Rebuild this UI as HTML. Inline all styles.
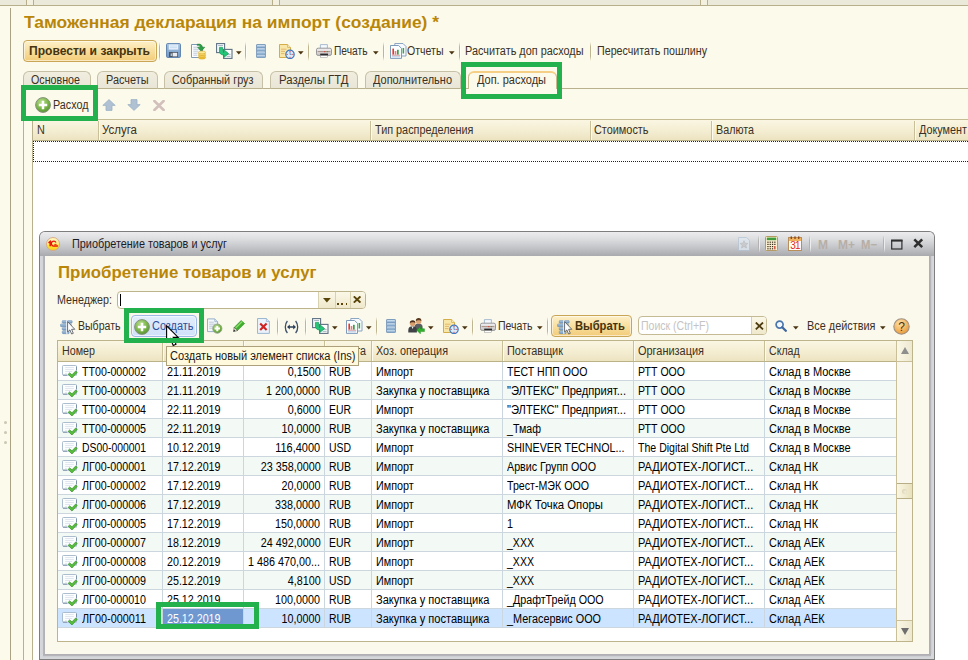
<!DOCTYPE html>
<html><head><meta charset="utf-8"><title>1C</title>
<style>
html,body{margin:0;padding:0;overflow:hidden;}
html{width:968px;height:660px;}
body{width:968px;height:660px;overflow:hidden;background:#fcfaeb;position:relative;font-family:"Liberation Sans", sans-serif;}
div,span,svg{position:absolute;box-sizing:border-box;}
span{white-space:pre;}
</style></head><body>
<div style="left:0px;top:0px;width:968px;height:5px;background:#ebe9da;"></div><div style="left:0px;top:5px;width:968px;height:1px;background:#b7ae8b;"></div><div style="left:26px;top:0px;width:1px;height:5px;background:#b7ae8b;"></div><div style="left:33px;top:0px;width:1px;height:5px;background:#b7ae8b;"></div><div style="left:272px;top:0px;width:1px;height:5px;background:#b7ae8b;"></div><div style="left:279px;top:0px;width:1px;height:5px;background:#b7ae8b;"></div><div style="left:700px;top:0px;width:1px;height:5px;background:#b7ae8b;"></div><div style="left:707px;top:0px;width:1px;height:5px;background:#b7ae8b;"></div><div style="left:27px;top:0px;width:6px;height:5px;background:#f3f0df;"></div><div style="left:273px;top:0px;width:6px;height:5px;background:#f3f0df;"></div><div style="left:701px;top:0px;width:6px;height:5px;background:#f3f0df;"></div><div style="left:10px;top:8px;width:1px;height:652px;background:#aaa283;"></div><div style="left:23px;top:121px;width:1px;height:539px;background:#b9b18e;"></div><div style="left:3.5px;top:420.5px;width:3px;height:3px;background:#cbc7b4;border-radius:1.5px;"></div><div style="left:3.5px;top:430.5px;width:3px;height:3px;background:#cbc7b4;border-radius:1.5px;"></div><div style="left:3.5px;top:440.5px;width:3px;height:3px;background:#cbc7b4;border-radius:1.5px;"></div><span style="top:11.88px;font-size:17px;line-height:21px;color:#b98608;font-weight:bold;left:23.7px;transform-origin:0 0;transform:scaleX(1.0249);">Таможенная декларация на импорт (создание) *</span><div style="left:23px;top:40px;width:134px;height:22px;border:1px solid #c8a656;border-radius:4px;background:linear-gradient(#fdf0c8,#f8dd9a 55%,#f2cc78);box-shadow:inset 0 0 0 1px rgba(255,255,255,.55);"></div><span style="top:43.03px;font-size:12px;line-height:16px;color:#45340f;font-weight:bold;left:28.7px;transform-origin:0 0;transform:scaleX(1.0057);">Провести и закрыть</span><div style="left:159px;top:42px;width:1px;height:19px;background:linear-gradient(rgba(190,180,140,0),#bfb58e 25%,#bfb58e 75%,rgba(190,180,140,0));"></div><div style="left:160px;top:42px;width:1px;height:19px;background:linear-gradient(rgba(255,255,255,0),#fffef6 25%,#fffef6 75%,rgba(255,255,255,0));"></div><div style="left:245px;top:42px;width:1px;height:19px;background:linear-gradient(rgba(190,180,140,0),#bfb58e 25%,#bfb58e 75%,rgba(190,180,140,0));"></div><div style="left:246px;top:42px;width:1px;height:19px;background:linear-gradient(rgba(255,255,255,0),#fffef6 25%,#fffef6 75%,rgba(255,255,255,0));"></div><div style="left:308px;top:42px;width:1px;height:19px;background:linear-gradient(rgba(190,180,140,0),#bfb58e 25%,#bfb58e 75%,rgba(190,180,140,0));"></div><div style="left:309px;top:42px;width:1px;height:19px;background:linear-gradient(rgba(255,255,255,0),#fffef6 25%,#fffef6 75%,rgba(255,255,255,0));"></div><div style="left:383px;top:42px;width:1px;height:19px;background:linear-gradient(rgba(190,180,140,0),#bfb58e 25%,#bfb58e 75%,rgba(190,180,140,0));"></div><div style="left:384px;top:42px;width:1px;height:19px;background:linear-gradient(rgba(255,255,255,0),#fffef6 25%,#fffef6 75%,rgba(255,255,255,0));"></div><div style="left:459px;top:42px;width:1px;height:19px;background:linear-gradient(rgba(190,180,140,0),#bfb58e 25%,#bfb58e 75%,rgba(190,180,140,0));"></div><div style="left:460px;top:42px;width:1px;height:19px;background:linear-gradient(rgba(255,255,255,0),#fffef6 25%,#fffef6 75%,rgba(255,255,255,0));"></div><div style="left:590px;top:42px;width:1px;height:19px;background:linear-gradient(rgba(190,180,140,0),#bfb58e 25%,#bfb58e 75%,rgba(190,180,140,0));"></div><div style="left:591px;top:42px;width:1px;height:19px;background:linear-gradient(rgba(255,255,255,0),#fffef6 25%,#fffef6 75%,rgba(255,255,255,0));"></div><svg style="left:166px;top:43px" width="16" height="16" viewBox="0 0 16 16">
<defs><linearGradient id="svb" x1="0" y1="0" x2="0" y2="1"><stop offset="0" stop-color="#a6c2e0"/><stop offset="1" stop-color="#7098c6"/></linearGradient></defs>
<rect x="0.5" y="0.5" width="14" height="14" rx="1.2" fill="url(#svb)" stroke="#6487b2"/>
<rect x="2.8" y="1.2" width="9.4" height="5.6" fill="#f4f9ff" stroke="#a9c3de" stroke-width=".6"/>
<path d="M3.8 3h7.4M3.8 4.8h7.4" stroke="#b5d3ee" stroke-width=".9"/>
<rect x="3" y="9" width="9" height="5" fill="#4d5560"/>
<rect x="6.6" y="9.8" width="4.6" height="3.6" fill="#e9edf2"/>
<rect x="4.6" y="10.4" width="1.4" height="2.6" fill="#a8c4e4"/></svg><svg style="left:191px;top:42.5px" width="16" height="17" viewBox="0 0 16 17">
<path d="M0.5 1.5 H9 L11.5 4 V14.5 H0.5 Z" fill="#fbfdff" stroke="#7f9ab8"/>
<path d="M2.3 4.2h5.4M2.3 6.2h6M2.3 8.2h5M2.3 10.2h4.4M2.3 12.2h4" stroke="#b7c4d2" stroke-width=".9"/>
<path d="M6.2 1.2 C9.5 0.6 11.2 1.8 11.2 4.2 H13.8 L10.2 8.4 L6.6 4.2 H9 C8.9 2.9 8 2.2 6.2 2.4 Z" fill="#2ea043" stroke="#1d7a2c" stroke-width=".5"/>
<g stroke="#c9951a" stroke-width=".5">
<ellipse cx="11" cy="14.6" rx="3.6" ry="1.5" fill="#f3c53a"/>
<ellipse cx="11" cy="12.8" rx="3.6" ry="1.5" fill="#f7d35a"/>
<ellipse cx="11" cy="11" rx="3.6" ry="1.5" fill="#f9dc70"/>
<ellipse cx="11" cy="9.4" rx="3.6" ry="1.5" fill="#fde88f"/></g></svg><svg style="left:215.5px;top:43px" width="17" height="16" viewBox="0 0 17 16">
<rect x="0.6" y="0.6" width="8" height="9" fill="#fdfefe" stroke="#5e7183" stroke-width="1.1"/>
<path d="M2.2 2.6h4.8" stroke="#9fb0c0" stroke-width="1"/>
<rect x="7.6" y="6.4" width="8.4" height="9" fill="#fdfefe" stroke="#5e7183" stroke-width="1.1"/>
<path d="M10.6 11.6h4M10.6 13.4h4" stroke="#9fb0c0" stroke-width=".9"/>
<path d="M3.4 4.4 H6.6 V8 C6.6 9 7.2 9.4 8.2 9.4 V7 L12.6 10.6 L8.2 14.2 V12 C5 12 3.4 10.6 3.4 8 Z" fill="#22c777" stroke="#0f9a57" stroke-width=".7"/></svg><svg style="left:236px;top:51px" width="6" height="4" viewBox="0 0 6 4"><path d="M0 0.3 H5.6 L2.8 3.4 Z" fill="#4a3410"/></svg><svg style="left:256px;top:44px" width="10" height="14" viewBox="0 0 10 14">
<defs><linearGradient id="lsb" x1="0" y1="0" x2="0" y2="1"><stop offset="0" stop-color="#e3eef8"/><stop offset=".5" stop-color="#a8c4df"/><stop offset="1" stop-color="#86a9cc"/></linearGradient></defs>
<rect x=".3" y=".3" width="9.4" height="13.4" rx="1.3" fill="#6f94ba" stroke="#6489b0" stroke-width=".5"/><rect x="1" y="0.9" width="8" height="2.6" rx=".6" fill="url(#lsb)"/><rect x="1" y="4.15" width="8" height="2.6" rx=".6" fill="url(#lsb)"/><rect x="1" y="7.4" width="8" height="2.6" rx=".6" fill="url(#lsb)"/><rect x="1" y="10.65" width="8" height="2.6" rx=".6" fill="url(#lsb)"/></svg><svg style="left:278.5px;top:43.7px" width="16" height="15" viewBox="0 0 16 15">
<path d="M0.5 0.5 H8.6 L11.5 3.4 V13.5 H0.5 Z" fill="#f8e7a6" stroke="#d3ad4a"/>
<path d="M8.6 0.5 V3.4 H11.5" fill="#fdf4cf" stroke="#d3ad4a" stroke-width=".8"/>
<path d="M2.3 5.2h5M2.3 7.4h3.4M2.3 9.6h3" stroke="#d9a35a" stroke-width="1" stroke-dasharray="1.4 .6"/>
<circle cx="11" cy="10.4" r="4.2" fill="#deebf9" stroke="#3f78c4" stroke-width="1.2"/>
<path d="M11 10.6 V8 M11 10.4 H12.8" stroke="#5a88c8" stroke-width=".8"/>
<g fill="#e03030"><rect x="10.5" y="7" width="1" height="1.1"/><rect x="10.5" y="12.8" width="1" height="1.1"/><rect x="7.6" y="9.9" width="1.1" height="1"/><rect x="13.3" y="9.9" width="1.1" height="1"/></g></svg><svg style="left:298px;top:51px" width="6" height="4" viewBox="0 0 6 4"><path d="M0 0.3 H5.6 L2.8 3.4 Z" fill="#4a3410"/></svg><svg style="left:315.5px;top:44px" width="16" height="14" viewBox="0 0 16 14">
<defs><linearGradient id="prb" x1="0" y1="0" x2="0" y2="1"><stop offset="0" stop-color="#f3f3f4"/><stop offset="1" stop-color="#c6c3c0"/></linearGradient></defs>
<path d="M4.4 4.6 V0.6 H11.4 V4.6" fill="#f4faff" stroke="#9fb6cc" stroke-width=".9"/>
<rect x="0.5" y="4.2" width="15" height="7.2" rx="1.6" fill="url(#prb)" stroke="#97979a"/>
<path d="M1.6 7.6h12.8" stroke="#a98f84" stroke-width="1"/>
<rect x="8.2" y="7.1" width="1.2" height="1.1" fill="#e23a2a"/><rect x="10.8" y="7.1" width="1.2" height="1.1" fill="#3daa3a"/>
<rect x="4.2" y="9.6" width="7.8" height="2.6" fill="#2b2b2d"/>
<rect x="4.6" y="11.6" width="7" height="1.8" fill="#fff" stroke="#9a9a9a" stroke-width=".5"/></svg><svg style="left:372.5px;top:51px" width="6" height="4" viewBox="0 0 6 4"><path d="M0 0.3 H5.6 L2.8 3.4 Z" fill="#4a3410"/></svg><svg style="left:389.5px;top:42.8px" width="17" height="16" viewBox="0 0 17 16">
<path d="M4.8 0.5 H13 L16 3.5 V13 H4.8 Z" fill="#f6f9fd" stroke="#7f9cbd" stroke-width=".9"/>
<rect x="12.6" y="5" width="1.5" height="5.5" fill="#3aa44a"/>
<path d="M0.5 2.5 H8.6 L11.5 5.4 V15.4 H0.5 Z" fill="#fbfdff" stroke="#7090b4" stroke-width=".9"/>
<rect x="2.4" y="5.6" width="1.6" height="6" fill="#e2392e"/><rect x="4.7" y="8" width="1.6" height="3.6" fill="#ef7a6d"/>
<rect x="7" y="6.8" width="1.7" height="4.8" fill="#35a048"/>
<path d="M1.8 12.2h8.4" stroke="#c26a6a" stroke-width=".7"/><path d="M2 13.8h8" stroke="#a9c3e2" stroke-width=".9"/></svg><svg style="left:448.5px;top:51px" width="6" height="4" viewBox="0 0 6 4"><path d="M0 0.3 H5.6 L2.8 3.4 Z" fill="#4a3410"/></svg><span style="top:43.03px;font-size:12px;line-height:16px;color:#3a3124;left:334.2px;transform-origin:0 0;transform:scaleX(0.8521);">Печать</span><span style="top:43.03px;font-size:12px;line-height:16px;color:#3a3124;left:406.7px;transform-origin:0 0;transform:scaleX(0.8798);">Отчеты</span><span style="top:43.03px;font-size:12px;line-height:16px;color:#3a3124;left:465.2px;transform-origin:0 0;transform:scaleX(0.9065);">Расчитать доп расходы</span><span style="top:43.03px;font-size:12px;line-height:16px;color:#3a3124;left:596.7px;transform-origin:0 0;transform:scaleX(0.891);">Пересчитать пошлину</span><div style="left:23px;top:88px;width:945px;height:1px;background:#b9b18e;"></div><div style="left:23px;top:71px;width:68px;height:18px;border:1px solid #c6c0a6;border-bottom:1px solid #b9b18e;border-radius:6px 6px 0 0;background:linear-gradient(#f1eee0,#e9e6d6);"></div><span style="top:72.03px;font-size:12px;line-height:16px;color:#3a3124;left:31.2px;transform-origin:0 0;transform:scaleX(0.8912);">Основное</span><div style="left:97px;top:71px;width:61px;height:18px;border:1px solid #c6c0a6;border-bottom:1px solid #b9b18e;border-radius:6px 6px 0 0;background:linear-gradient(#f1eee0,#e9e6d6);"></div><span style="top:72.03px;font-size:12px;line-height:16px;color:#3a3124;left:106.2px;transform-origin:0 0;transform:scaleX(0.9082);">Расчеты</span><div style="left:164px;top:71px;width:99px;height:18px;border:1px solid #c6c0a6;border-bottom:1px solid #b9b18e;border-radius:6px 6px 0 0;background:linear-gradient(#f1eee0,#e9e6d6);"></div><span style="top:72.03px;font-size:12px;line-height:16px;color:#3a3124;left:171.7px;transform-origin:0 0;transform:scaleX(0.9065);">Собранный груз</span><div style="left:270px;top:71px;width:88px;height:18px;border:1px solid #c6c0a6;border-bottom:1px solid #b9b18e;border-radius:6px 6px 0 0;background:linear-gradient(#f1eee0,#e9e6d6);"></div><span style="top:72.03px;font-size:12px;line-height:16px;color:#3a3124;left:278.9px;transform-origin:0 0;transform:scaleX(0.9496);">Разделы ГТД</span><div style="left:365px;top:71px;width:96px;height:18px;border:1px solid #c6c0a6;border-bottom:1px solid #b9b18e;border-radius:6px 6px 0 0;background:linear-gradient(#f1eee0,#e9e6d6);"></div><span style="top:72.03px;font-size:12px;line-height:16px;color:#3a3124;left:372.7px;transform-origin:0 0;transform:scaleX(0.9146);">Дополнительно</span><div style="left:468px;top:71px;width:89px;height:18px;border:1px solid #c4b88c;border-bottom:none;border-radius:6px 6px 0 0;background:#fcfaeb;border-top:2px solid #f6cf86;"></div><span style="top:72.03px;font-size:12px;line-height:16px;color:#3a3124;left:476.7px;transform-origin:0 0;transform:scaleX(0.9156);">Доп. расходы</span><svg style="left:35px;top:97px" width="16" height="16" viewBox="0 0 16 16">
<defs><radialGradient id="gpa" cx=".4" cy=".3" r=".8"><stop offset="0" stop-color="#b7dd8b"/><stop offset=".55" stop-color="#7ab648"/><stop offset="1" stop-color="#4c8a2b"/></radialGradient></defs>
<circle cx="8" cy="8" r="7.4" fill="url(#gpa)" stroke="#85927c" stroke-width="1"/>
<path d="M8 3.8 V12.2 M3.8 8 H12.2" stroke="#fff" stroke-width="2.5"/></svg><svg style="left:101.5px;top:99px" width="14" height="12" viewBox="0 0 14 12"><path d="M7 0.6 L13.2 6.4 H10 V11.4 H4 V6.4 H0.8 Z" fill="#afc1d2" stroke="#9db2c6" stroke-width=".8"/></svg><svg style="left:126.5px;top:99px" width="14" height="12" viewBox="0 0 14 12"><path d="M7 11.4 L13.2 5.6 H10 V0.6 H4 V5.6 H0.8 Z" fill="#afc1d2" stroke="#9db2c6" stroke-width=".8"/></svg><svg style="left:152.5px;top:100.2px" width="12" height="11" viewBox="0 0 12 11"><path d="M1.4 1 L10.6 10 M10.6 1 L1.4 10" stroke="#d2c0bd" stroke-width="2.6" stroke-linecap="round"/></svg><span style="top:97.03px;font-size:12px;line-height:16px;color:#3a3124;left:52.7px;transform-origin:0 0;transform:scaleX(0.8973);">Расход</span><div style="left:33px;top:141px;width:935px;height:519px;background:#fff;"></div><div style="left:32px;top:119px;width:936px;height:22px;background:linear-gradient(#faf6e2,#f3ecd0 60%,#ece3c0);border-top:1px solid #c5bc93;border-bottom:1px solid #bcb288;"></div><div style="left:32px;top:119px;width:1px;height:541px;background:#b9b18e;"></div><div style="left:98px;top:121px;width:1px;height:19px;background:#c9c09a;"></div><div style="left:99px;top:121px;width:1px;height:19px;background:#fdfbee;"></div><div style="left:370px;top:121px;width:1px;height:19px;background:#c9c09a;"></div><div style="left:371px;top:121px;width:1px;height:19px;background:#fdfbee;"></div><div style="left:590px;top:121px;width:1px;height:19px;background:#c9c09a;"></div><div style="left:591px;top:121px;width:1px;height:19px;background:#fdfbee;"></div><div style="left:711px;top:121px;width:1px;height:19px;background:#c9c09a;"></div><div style="left:712px;top:121px;width:1px;height:19px;background:#fdfbee;"></div><div style="left:914px;top:121px;width:1px;height:19px;background:#c9c09a;"></div><div style="left:915px;top:121px;width:1px;height:19px;background:#fdfbee;"></div><span style="top:122.03px;font-size:12px;line-height:16px;color:#3a3124;left:36.7px;transform-origin:0 0;transform:scaleX(0.9);">N</span><span style="top:122.03px;font-size:12px;line-height:16px;color:#3a3124;left:101.7px;transform-origin:0 0;transform:scaleX(0.956);">Услуга</span><span style="top:122.03px;font-size:12px;line-height:16px;color:#3a3124;left:375.0px;transform-origin:0 0;transform:scaleX(0.9032);">Тип распределения</span><span style="top:122.03px;font-size:12px;line-height:16px;color:#3a3124;left:594.2px;transform-origin:0 0;transform:scaleX(0.9072);">Стоимость</span><span style="top:122.03px;font-size:12px;line-height:16px;color:#3a3124;left:715.7px;transform-origin:0 0;transform:scaleX(0.8951);">Валюта</span><span style="top:122.03px;font-size:12px;line-height:16px;color:#3a3124;left:919.2px;transform-origin:0 0;transform:scaleX(0.9);">Документ</span><div style="left:33px;top:141px;width:935px;height:21px;border:1px dotted #222;border-right:none;"></div><div style="left:461px;top:62px;width:101px;height:37px;border:5px solid #22b14c;"></div><div style="left:21px;top:85px;width:77px;height:36px;border:5px solid #22b14c;"></div><div style="left:39px;top:231px;width:896px;height:429px;background:#d3d5d9;border:1px solid #7e7e7e;border-bottom:none;border-radius:6px 6px 0 0;"></div><div style="left:40px;top:232px;width:894px;height:24px;border-radius:5px 5px 0 0;background:linear-gradient(#ececee,#dcdddf 30%,#c4c5c9 65%,#a9aaae);"></div><div style="left:40px;top:256px;width:5px;height:398px;background:linear-gradient(90deg,#d6d8dc,#d2d4d8 50%,#b6b6ba 70%,#b0b0b4);"></div><div style="left:929px;top:256px;width:5px;height:398px;background:linear-gradient(90deg,#adadb1,#b6b6ba 30%,#d2d4d8 55%,#d6d8dc);"></div><div style="left:45px;top:256px;width:884px;height:398px;background:#fbf9ec;"></div><div style="left:40px;top:654px;width:894px;height:5px;background:linear-gradient(180deg,#adadb1,#b6b6ba 30%,#d2d4d8 55%,#d6d8dc);"></div><div style="left:40px;top:654px;width:3px;height:5px;background:#d5d7db;"></div><div style="left:931px;top:654px;width:3px;height:5px;background:#d5d7db;"></div><div style="left:39px;top:659px;width:896px;height:1px;background:#7e7e7e;"></div><span style="top:236.03px;font-size:12px;line-height:16px;color:#1c1c28;left:72.2px;transform-origin:0 0;transform:scaleX(0.9055);">Приобретение товаров и услуг</span><svg style="left:46px;top:237px" width="14" height="14" viewBox="0 0 14 14">
<defs><linearGradient id="c1" x1="0" y1="0" x2="0" y2="1"><stop offset="0" stop-color="#fff6c4"/><stop offset=".45" stop-color="#fff08a"/><stop offset=".62" stop-color="#ffe531"/><stop offset="1" stop-color="#f7cf1c"/></linearGradient></defs>
<circle cx="7" cy="7" r="6.5" fill="url(#c1)" stroke="#d7a583" stroke-width=".9"/>
<path d="M2.5 5.9 L4.2 4.5 V9.3" fill="none" stroke="#e8140c" stroke-width="1.5"/>
<path d="M10 5.5 A2.5 2.4 0 1 0 8.2 9 H11.9" fill="none" stroke="#e8140c" stroke-width="1.3"/>
<path d="M8.3 7.4 H10.6" fill="none" stroke="#e8140c" stroke-width=".9"/></svg><svg style="left:738px;top:237px" width="12" height="14" viewBox="0 0 12 14">
<g opacity=".75"><path d="M0.5 0.5 H8.6 L11.5 3.4 V13.5 H0.5 Z" fill="#dfe7ef" stroke="#b1c2d2" stroke-width=".9"/>
<path d="M6 3.6 L7.1 6.2 L9.9 6.4 L7.8 8.2 L8.5 11 L6 9.5 L3.5 11 L4.2 8.2 L2.1 6.4 L4.9 6.2 Z" fill="#c9c9c9" stroke="#a9adb2" stroke-width=".5"/></g></svg><svg style="left:765px;top:236px" width="13" height="15" viewBox="0 0 13 15">
<rect x="0.5" y="0.5" width="12" height="14" rx="1" fill="#fbf0d2" stroke="#b79a63"/>
<rect x="1.8" y="1.6" width="9.4" height="2.6" fill="#3f9d3c"/>
<g fill="#3b2f1c"><rect x="2.3" y="5.6" width="1.3" height="1.2"/><rect x="4.6" y="5.6" width="1.3" height="1.2"/><rect x="6.8999999999999995" y="5.6" width="1.3" height="1.2"/><rect x="9.2" y="5.6" width="1.3" height="1.2"/><rect x="2.3" y="7.8" width="1.3" height="1.2"/><rect x="4.6" y="7.8" width="1.3" height="1.2"/><rect x="6.8999999999999995" y="7.8" width="1.3" height="1.2"/><rect x="9.2" y="7.8" width="1.3" height="1.2"/><rect x="2.3" y="10.0" width="1.3" height="1.2"/><rect x="4.6" y="10.0" width="1.3" height="1.2"/><rect x="6.8999999999999995" y="10.0" width="1.3" height="1.2"/><rect x="2.3" y="12.2" width="1.3" height="1.2"/><rect x="4.6" y="12.2" width="1.3" height="1.2"/><rect x="6.8999999999999995" y="12.2" width="1.3" height="1.2"/></g>
<rect x="9.2" y="10" width="1.3" height="3.4" fill="#c7402c"/></svg><svg style="left:788px;top:236px" width="14" height="15" viewBox="0 0 14 15">
<rect x="0.5" y="1.5" width="13" height="13" fill="#fffdf6" stroke="#b98e5a"/>
<rect x="1" y="2" width="12" height="3" fill="#f0b25a"/>
<g fill="#8a4a1a"><rect x="2.6" y="0.4" width="1.4" height="2.6"/><rect x="6.3" y="0.4" width="1.4" height="2.6"/><rect x="10" y="0.4" width="1.4" height="2.6"/></g>
<text x="7" y="13.2" font-family="Liberation Sans" font-size="10" text-anchor="middle" fill="#e0281c" letter-spacing="-.7">31</text></svg><svg style="left:890.5px;top:238.6px" width="12" height="11" viewBox="0 0 12 11"><rect x="0.7" y="1.4" width="10.2" height="8.6" fill="none" stroke="#2e2e2e" stroke-width="1.2"/><rect x="0.1" y="0.6" width="11.4" height="2" fill="#2e2e2e"/></svg><svg style="left:913.3px;top:238.4px" width="11" height="11" viewBox="0 0 11 11"><path d="M1.3 1.3 L9.2 9.2 M9.2 1.3 L1.3 9.2" stroke="#2e2e2e" stroke-width="2.5"/></svg><div style="left:758px;top:236px;width:1px;height:16px;background:linear-gradient(rgba(170,170,170,.2),#b2b2b2 30%,#b2b2b2 70%,rgba(170,170,170,.2));"></div><div style="left:759px;top:236px;width:1px;height:16px;background:linear-gradient(rgba(240,240,240,.2),#ededed 30%,#ededed 70%,rgba(240,240,240,.2));"></div><div style="left:809px;top:236px;width:1px;height:16px;background:linear-gradient(rgba(170,170,170,.2),#b2b2b2 30%,#b2b2b2 70%,rgba(170,170,170,.2));"></div><div style="left:810px;top:236px;width:1px;height:16px;background:linear-gradient(rgba(240,240,240,.2),#ededed 30%,#ededed 70%,rgba(240,240,240,.2));"></div><div style="left:883px;top:236px;width:1px;height:16px;background:linear-gradient(rgba(170,170,170,.2),#b2b2b2 30%,#b2b2b2 70%,rgba(170,170,170,.2));"></div><div style="left:884px;top:236px;width:1px;height:16px;background:linear-gradient(rgba(240,240,240,.2),#ededed 30%,#ededed 70%,rgba(240,240,240,.2));"></div><span style="top:236.87px;font-size:12.5px;line-height:16px;color:#b7aea6;font-weight:bold;left:817.8px;transform-origin:0 0;transform:scaleX(0.9595);">M</span><span style="top:236.87px;font-size:12.5px;line-height:16px;color:#b7aea6;font-weight:bold;left:837.8px;transform-origin:0 0;transform:scaleX(0.9594);">M+</span><span style="top:236.87px;font-size:12.5px;line-height:16px;color:#b7aea6;font-weight:bold;left:860.6px;transform-origin:0 0;transform:scaleX(0.903);">M−</span><span style="top:261.88px;font-size:17px;line-height:21px;color:#b98608;font-weight:bold;left:57.7px;transform-origin:0 0;transform:scaleX(0.99);">Приобретение товаров и услуг</span><span style="top:292.03px;font-size:12px;line-height:16px;color:#3a3124;left:56.7px;transform-origin:0 0;transform:scaleX(0.8934);">Менеджер:</span><div style="left:117px;top:291px;width:249px;height:18px;border:1px solid #bdb48c;border-radius:4px;background:#fff;"></div><div style="left:120px;top:294px;width:1px;height:12px;background:#000;"></div><div style="left:318px;top:292px;width:1px;height:16px;background:#d8d1b0;"></div><div style="left:319px;top:292px;width:46px;height:16px;background:linear-gradient(#fbf8e8,#efe8cc);border-radius:0 3px 3px 0;"></div><div style="left:335px;top:292px;width:1px;height:16px;background:#d8d1b0;"></div><div style="left:350px;top:292px;width:1px;height:16px;background:#d8d1b0;"></div><svg style="left:323px;top:298px" width="8" height="5" viewBox="0 0 8 5"><path d="M0 0 H7.8 L3.9 4.4 Z" fill="#5a4508"/></svg><div style="left:337.2px;top:303.2px;width:1.8px;height:1.8px;background:#5a4508;"></div><div style="left:341.4px;top:303.2px;width:1.8px;height:1.8px;background:#5a4508;"></div><div style="left:345.6px;top:303.2px;width:1.8px;height:1.8px;background:#5a4508;"></div><svg style="left:353px;top:296px" width="8" height="7" viewBox="0 0 8 7"><path d="M0.8 0.4 L7.4 6.6 M7.4 0.4 L0.8 6.6" stroke="#5a4508" stroke-width="1.9"/></svg><span style="top:318.03px;font-size:12px;line-height:16px;color:#3a3124;left:78.2px;transform-origin:0 0;transform:scaleX(0.8791);">Выбрать</span><div style="left:131px;top:315px;width:66px;height:22px;border:1px solid #9db8e6;border-radius:4px;background:linear-gradient(#e3eefd,#cfe0f9);box-shadow:inset 0 0 0 1px rgba(255,255,255,.6);"></div><span style="top:318.03px;font-size:12px;line-height:16px;color:#2f4f9c;left:151.7px;transform-origin:0 0;transform:scaleX(0.9099);">Создать</span><div style="left:277px;top:317px;width:1px;height:19px;background:linear-gradient(rgba(190,180,140,0),#bfb58e 25%,#bfb58e 75%,rgba(190,180,140,0));"></div><div style="left:278px;top:317px;width:1px;height:19px;background:linear-gradient(rgba(255,255,255,0),#fffef6 25%,#fffef6 75%,rgba(255,255,255,0));"></div><div style="left:305px;top:317px;width:1px;height:19px;background:linear-gradient(rgba(190,180,140,0),#bfb58e 25%,#bfb58e 75%,rgba(190,180,140,0));"></div><div style="left:306px;top:317px;width:1px;height:19px;background:linear-gradient(rgba(255,255,255,0),#fffef6 25%,#fffef6 75%,rgba(255,255,255,0));"></div><div style="left:376px;top:317px;width:1px;height:19px;background:linear-gradient(rgba(190,180,140,0),#bfb58e 25%,#bfb58e 75%,rgba(190,180,140,0));"></div><div style="left:377px;top:317px;width:1px;height:19px;background:linear-gradient(rgba(255,255,255,0),#fffef6 25%,#fffef6 75%,rgba(255,255,255,0));"></div><div style="left:472px;top:317px;width:1px;height:19px;background:linear-gradient(rgba(190,180,140,0),#bfb58e 25%,#bfb58e 75%,rgba(190,180,140,0));"></div><div style="left:473px;top:317px;width:1px;height:19px;background:linear-gradient(rgba(255,255,255,0),#fffef6 25%,#fffef6 75%,rgba(255,255,255,0));"></div><div style="left:547px;top:317px;width:1px;height:19px;background:linear-gradient(rgba(190,180,140,0),#bfb58e 25%,#bfb58e 75%,rgba(190,180,140,0));"></div><div style="left:548px;top:317px;width:1px;height:19px;background:linear-gradient(rgba(255,255,255,0),#fffef6 25%,#fffef6 75%,rgba(255,255,255,0));"></div><span style="top:318.03px;font-size:12px;line-height:16px;color:#3a3124;left:498.2px;transform-origin:0 0;transform:scaleX(0.8776);">Печать</span><div style="left:551px;top:315px;width:81px;height:22px;border:1px solid #c8a656;border-radius:4px;background:linear-gradient(#fdf0c8,#f8dd9a 55%,#f2cc78);box-shadow:inset 0 0 0 1px rgba(255,255,255,.55);"></div><span style="top:318.03px;font-size:12px;line-height:16px;color:#45340f;font-weight:bold;left:575.2px;transform-origin:0 0;transform:scaleX(0.9329);">Выбрать</span><div style="left:638px;top:316px;width:129px;height:19px;border:1px solid #c4bb94;border-radius:4px;background:#fff;"></div><div style="left:751px;top:317px;width:1px;height:17px;background:#d8d1b0;"></div><div style="left:752px;top:317px;width:14px;height:17px;background:linear-gradient(#fbf8e8,#efe8cc);border-radius:0 3px 3px 0;"></div><span style="top:318.03px;font-size:12px;line-height:16px;color:#c4c4c4;left:641.2px;transform-origin:0 0;transform:scaleX(0.8765);">Поиск (Ctrl+F)</span><span style="top:318.03px;font-size:12px;line-height:16px;color:#3a3124;left:807.4px;transform-origin:0 0;transform:scaleX(0.9077);">Все действия</span><svg style="left:60px;top:319.5px" width="16" height="15" viewBox="0 0 16 15">
<defs><linearGradient id="slb" x1="0" y1="0" x2="0" y2="1"><stop offset="0" stop-color="#b4cde6"/><stop offset="1" stop-color="#6d93bb"/></linearGradient></defs>
<g fill="url(#slb)" stroke="#6a8fb6" stroke-width=".5">
<rect x="2.2" y=".4" width="10" height="2.8" rx=".9"/><rect x=".4" y="3.9" width="11" height="2.8" rx=".9"/>
<rect x="2.2" y="7.4" width="9" height="2.8" rx=".9"/><rect x="2.2" y="10.9" width="7" height="2.8" rx=".9"/></g>
<rect x="6.2" y=".2" width="1.3" height="13.6" fill="#fff" opacity=".9"/>
<path d="M7.6 1.6 V12 L9.9 9.9 L11.6 14 L13.3 13.3 L11.6 9.3 H14.8 Z" fill="#fff" stroke="#4a4f58" stroke-width=".8" stroke-linejoin="round"/></svg><svg style="left:134px;top:318.5px" width="16" height="16" viewBox="0 0 16 16">
<defs><radialGradient id="gpb" cx=".4" cy=".3" r=".8"><stop offset="0" stop-color="#b7dd8b"/><stop offset=".55" stop-color="#7ab648"/><stop offset="1" stop-color="#4c8a2b"/></radialGradient></defs>
<circle cx="8" cy="8" r="7.4" fill="url(#gpb)" stroke="#85927c" stroke-width="1"/>
<path d="M8 3.8 V12.2 M3.8 8 H12.2" stroke="#fff" stroke-width="2.5"/></svg><svg style="left:207px;top:318.3px" width="16" height="16" viewBox="0 0 16 16">
<defs><radialGradient id="gdp" cx=".4" cy=".3" r=".8"><stop offset="0" stop-color="#b7dd8b"/><stop offset=".6" stop-color="#72b043"/><stop offset="1" stop-color="#4c8a2b"/></radialGradient></defs>
<path d="M0.5 0.9 H7.8 L10.6 3.7 V13.6 H0.5 Z" fill="#f4f8fc" stroke="#8da7c4" stroke-width=".9"/>
<path d="M7.8 0.9 V3.7 H10.6" fill="#dfe9f4" stroke="#8da7c4" stroke-width=".7"/>
<path d="M2.2 4.2h4.6M2.2 6.2h6M2.2 8.2h4M2.2 10.2h3" stroke="#b4c3d3" stroke-width=".9"/>
<circle cx="10.3" cy="10.6" r="4.6" fill="url(#gdp)" stroke="#90a088" stroke-width=".9"/>
<path d="M10.3 7.9 V13.3 M7.6 10.6 H13" stroke="#fff" stroke-width="2"/></svg><svg style="left:233px;top:320.3px" width="12" height="12" viewBox="0 0 12 12">
<path d="M8.2 0.5 L11.6 3.6 L4.4 10.6 L1.2 7.4 Z" fill="#3fae2e" stroke="#2a8a1e" stroke-width=".6"/>
<path d="M9.3 1.5 L2.6 8" stroke="#8ee070" stroke-width="1.1"/>
<path d="M1.2 7.4 L4.4 10.6 L0.5 11.6 Z" fill="#f5f0e0" stroke="#3a4a30" stroke-width=".6"/>
<path d="M0.5 11.6 L1.1 9.6 L2.4 10.9 Z" fill="#222"/></svg><svg style="left:257px;top:318px" width="13" height="16" viewBox="0 0 13 16">
<path d="M0.5 0.5 H9.4 L12.4 3.5 V15.4 H0.5 Z" fill="#eaf2fb" stroke="#93b0cf" stroke-width=".9"/>
<path d="M9.4 0.5 V3.5 H12.4" fill="#d4e2f1" stroke="#93b0cf" stroke-width=".7"/>
<path d="M3.2 5.6 L9.6 12 M9.6 5.6 L3.2 12" stroke="#cf2222" stroke-width="2.1"/></svg><svg style="left:284px;top:320px" width="15" height="14" viewBox="0 0 15 14">
<path d="M3.4 1 C0.6 4.2 0.6 9.8 3.4 13 M11.6 1 C14.4 4.2 14.4 9.8 11.6 13" fill="none" stroke="#3a4e68" stroke-width="1.3"/>
<path d="M4.6 7 H10.4" stroke="#2b3f5a" stroke-width="1.5"/>
<path d="M3 7 L5.8 4.4 V9.6 Z M12 7 L9.2 4.4 V9.6 Z" fill="#2b3f5a"/></svg><svg style="left:311.5px;top:318.2px" width="17" height="16" viewBox="0 0 17 16">
<rect x="0.6" y="0.6" width="8" height="9" fill="#fdfefe" stroke="#5e7183" stroke-width="1.1"/>
<path d="M2.2 2.6h4.8" stroke="#9fb0c0" stroke-width="1"/>
<rect x="7.6" y="6.4" width="8.4" height="9" fill="#fdfefe" stroke="#5e7183" stroke-width="1.1"/>
<path d="M10.6 11.6h4M10.6 13.4h4" stroke="#9fb0c0" stroke-width=".9"/>
<path d="M3.4 4.4 H6.6 V8 C6.6 9 7.2 9.4 8.2 9.4 V7 L12.6 10.6 L8.2 14.2 V12 C5 12 3.4 10.6 3.4 8 Z" fill="#22c777" stroke="#0f9a57" stroke-width=".7"/></svg><svg style="left:332px;top:326px" width="6" height="4" viewBox="0 0 6 4"><path d="M0 0.3 H5.6 L2.8 3.4 Z" fill="#4a3410"/></svg><svg style="left:345.5px;top:318px" width="17" height="16" viewBox="0 0 17 16">
<path d="M4.8 0.5 H13 L16 3.5 V13 H4.8 Z" fill="#f6f9fd" stroke="#7f9cbd" stroke-width=".9"/>
<rect x="12.6" y="5" width="1.5" height="5.5" fill="#3aa44a"/>
<path d="M0.5 2.5 H8.6 L11.5 5.4 V15.4 H0.5 Z" fill="#fbfdff" stroke="#7090b4" stroke-width=".9"/>
<rect x="2.4" y="5.6" width="1.6" height="6" fill="#e2392e"/><rect x="4.7" y="8" width="1.6" height="3.6" fill="#ef7a6d"/>
<rect x="7" y="6.8" width="1.7" height="4.8" fill="#35a048"/>
<path d="M1.8 12.2h8.4" stroke="#c26a6a" stroke-width=".7"/><path d="M2 13.8h8" stroke="#a9c3e2" stroke-width=".9"/></svg><svg style="left:366px;top:326px" width="6" height="4" viewBox="0 0 6 4"><path d="M0 0.3 H5.6 L2.8 3.4 Z" fill="#4a3410"/></svg><svg style="left:386px;top:319px" width="10" height="14" viewBox="0 0 10 14">
<defs><linearGradient id="lsb" x1="0" y1="0" x2="0" y2="1"><stop offset="0" stop-color="#e3eef8"/><stop offset=".5" stop-color="#a8c4df"/><stop offset="1" stop-color="#86a9cc"/></linearGradient></defs>
<rect x=".3" y=".3" width="9.4" height="13.4" rx="1.3" fill="#6f94ba" stroke="#6489b0" stroke-width=".5"/><rect x="1" y="0.9" width="8" height="2.6" rx=".6" fill="url(#lsb)"/><rect x="1" y="4.15" width="8" height="2.6" rx=".6" fill="url(#lsb)"/><rect x="1" y="7.4" width="8" height="2.6" rx=".6" fill="url(#lsb)"/><rect x="1" y="10.65" width="8" height="2.6" rx=".6" fill="url(#lsb)"/></svg><svg style="left:407.5px;top:318px" width="17" height="16" viewBox="0 0 17 16">
<path d="M6.6 9 C6.6 6.4 8.4 5.6 10.4 5.6 C12.6 5.6 14.6 6.6 14.6 9 V12.8 H6.6 Z" fill="#5b5d63"/>
<circle cx="10.6" cy="3.4" r="2.7" fill="#dba577"/>
<path d="M7.8 3.2 C7.6 0.6 9.4 0 10.8 0.1 C12.4 0.2 13.6 1 13.4 3.2 C12.4 1.8 9.2 1.8 7.8 3.2 Z" fill="#5a3a1e"/>
<path d="M0.3 12 C0.3 9.2 2.2 8.2 4.6 8.2 C7 8.2 8.9 9.2 8.9 12 V14.6 H0.3 Z" fill="#3f4147"/>
<path d="M3.6 8.4 L4.6 11 L5.6 8.4 Z" fill="#f4f4f4"/>
<circle cx="4.6" cy="5.6" r="2.7" fill="#d79f70"/>
<path d="M1.8 5.4 C1.6 2.8 3.4 2.2 4.8 2.3 C6.4 2.4 7.6 3.2 7.4 5.4 C6.4 4 3.2 4 1.8 5.4 Z" fill="#4c2f18"/>
<path d="M8.6 12.2 L12.4 8.6 V10.8 H16.4 V13.6 H12.4 V15.8 Z" fill="#2fb12c" stroke="#1c8a1e" stroke-width=".5"/></svg><svg style="left:428.2px;top:326px" width="6" height="4" viewBox="0 0 6 4"><path d="M0 0.3 H5.6 L2.8 3.4 Z" fill="#4a3410"/></svg><svg style="left:443px;top:318.7px" width="16" height="15" viewBox="0 0 16 15">
<path d="M0.5 0.5 H8.6 L11.5 3.4 V13.5 H0.5 Z" fill="#f8e7a6" stroke="#d3ad4a"/>
<path d="M8.6 0.5 V3.4 H11.5" fill="#fdf4cf" stroke="#d3ad4a" stroke-width=".8"/>
<path d="M2.3 5.2h5M2.3 7.4h3.4M2.3 9.6h3" stroke="#d9a35a" stroke-width="1" stroke-dasharray="1.4 .6"/>
<circle cx="11" cy="10.4" r="4.2" fill="#deebf9" stroke="#3f78c4" stroke-width="1.2"/>
<path d="M11 10.6 V8 M11 10.4 H12.8" stroke="#5a88c8" stroke-width=".8"/>
<g fill="#e03030"><rect x="10.5" y="7" width="1" height="1.1"/><rect x="10.5" y="12.8" width="1" height="1.1"/><rect x="7.6" y="9.9" width="1.1" height="1"/><rect x="13.3" y="9.9" width="1.1" height="1"/></g></svg><svg style="left:462px;top:326px" width="6" height="4" viewBox="0 0 6 4"><path d="M0 0.3 H5.6 L2.8 3.4 Z" fill="#4a3410"/></svg><svg style="left:479.7px;top:319.2px" width="16" height="14" viewBox="0 0 16 14">
<defs><linearGradient id="prb" x1="0" y1="0" x2="0" y2="1"><stop offset="0" stop-color="#f3f3f4"/><stop offset="1" stop-color="#c6c3c0"/></linearGradient></defs>
<path d="M4.4 4.6 V0.6 H11.4 V4.6" fill="#f4faff" stroke="#9fb6cc" stroke-width=".9"/>
<rect x="0.5" y="4.2" width="15" height="7.2" rx="1.6" fill="url(#prb)" stroke="#97979a"/>
<path d="M1.6 7.6h12.8" stroke="#a98f84" stroke-width="1"/>
<rect x="8.2" y="7.1" width="1.2" height="1.1" fill="#e23a2a"/><rect x="10.8" y="7.1" width="1.2" height="1.1" fill="#3daa3a"/>
<rect x="4.2" y="9.6" width="7.8" height="2.6" fill="#2b2b2d"/>
<rect x="4.6" y="11.6" width="7" height="1.8" fill="#fff" stroke="#9a9a9a" stroke-width=".5"/></svg><svg style="left:536.5px;top:326px" width="6" height="4" viewBox="0 0 6 4"><path d="M0 0.3 H5.6 L2.8 3.4 Z" fill="#4a3410"/></svg><svg style="left:557px;top:319.8px" width="16" height="15" viewBox="0 0 16 15">
<defs><linearGradient id="slb" x1="0" y1="0" x2="0" y2="1"><stop offset="0" stop-color="#b4cde6"/><stop offset="1" stop-color="#6d93bb"/></linearGradient></defs>
<g fill="url(#slb)" stroke="#6a8fb6" stroke-width=".5">
<rect x="2.2" y=".4" width="10" height="2.8" rx=".9"/><rect x=".4" y="3.9" width="11" height="2.8" rx=".9"/>
<rect x="2.2" y="7.4" width="9" height="2.8" rx=".9"/><rect x="2.2" y="10.9" width="7" height="2.8" rx=".9"/></g>
<rect x="6.2" y=".2" width="1.3" height="13.6" fill="#fff" opacity=".9"/>
<path d="M7.6 1.6 V12 L9.9 9.9 L11.6 14 L13.3 13.3 L11.6 9.3 H14.8 Z" fill="#fff" stroke="#4a4f58" stroke-width=".8" stroke-linejoin="round"/></svg><svg style="left:754.5px;top:322px" width="9" height="8" viewBox="0 0 9 8"><path d="M0.8 0.5 L8 7.4 M8 0.5 L0.8 7.4" stroke="#4f3d10" stroke-width="1.8"/></svg><svg style="left:775px;top:320.2px" width="12" height="12" viewBox="0 0 12 12">
<circle cx="4.6" cy="4.6" r="3.5" fill="#f4f8fd" stroke="#4a76ae" stroke-width="1.7"/>
<path d="M7.2 7.2 L10.8 10.8" stroke="#3f68a0" stroke-width="2.3" stroke-linecap="round"/></svg><svg style="left:793px;top:326.3px" width="6" height="4" viewBox="0 0 6 4"><path d="M0 0.3 H5.6 L2.8 3.4 Z" fill="#4a3410"/></svg><svg style="left:879.8px;top:326.3px" width="6" height="4" viewBox="0 0 6 4"><path d="M0 0.3 H5.6 L2.8 3.4 Z" fill="#4a3410"/></svg><svg style="left:893.3px;top:317.7px" width="17" height="17" viewBox="0 0 17 17">
<defs><radialGradient id="hlp" cx=".4" cy=".3" r=".85"><stop offset="0" stop-color="#fde1a8"/><stop offset=".55" stop-color="#f3b35c"/><stop offset="1" stop-color="#e08a2c"/></radialGradient></defs>
<circle cx="8.5" cy="8.5" r="7.7" fill="url(#hlp)" stroke="#9f9284" stroke-width="1.1"/>
<text x="8.5" y="12.6" font-family="Liberation Sans" font-size="12" text-anchor="middle" fill="#4a3010">?</text></svg><div style="left:57px;top:340px;width:856px;height:302px;background:#fff;border:1px solid #bdb48c;"></div><div style="left:58px;top:341px;width:854px;height:20px;background:linear-gradient(#faf6e2,#f3ecd0 60%,#ece3c0);"></div><div style="left:58px;top:361px;width:854px;height:1px;background:#bcb288;"></div><div style="left:162px;top:341px;width:1px;height:20px;background:#c9c09a;"></div><div style="left:163px;top:341px;width:1px;height:20px;background:#fdfbee;"></div><div style="left:243px;top:341px;width:1px;height:20px;background:#c9c09a;"></div><div style="left:244px;top:341px;width:1px;height:20px;background:#fdfbee;"></div><div style="left:324px;top:341px;width:1px;height:20px;background:#c9c09a;"></div><div style="left:325px;top:341px;width:1px;height:20px;background:#fdfbee;"></div><div style="left:371px;top:341px;width:1px;height:20px;background:#c9c09a;"></div><div style="left:372px;top:341px;width:1px;height:20px;background:#fdfbee;"></div><div style="left:502px;top:341px;width:1px;height:20px;background:#c9c09a;"></div><div style="left:503px;top:341px;width:1px;height:20px;background:#fdfbee;"></div><div style="left:633px;top:341px;width:1px;height:20px;background:#c9c09a;"></div><div style="left:634px;top:341px;width:1px;height:20px;background:#fdfbee;"></div><div style="left:764px;top:341px;width:1px;height:20px;background:#c9c09a;"></div><div style="left:765px;top:341px;width:1px;height:20px;background:#fdfbee;"></div><div style="left:896px;top:341px;width:1px;height:20px;background:#c9c09a;"></div><div style="left:897px;top:341px;width:1px;height:20px;background:#fdfbee;"></div><span style="top:343.03px;font-size:12px;line-height:16px;color:#3a3124;left:61.7px;transform-origin:0 0;transform:scaleX(0.8934);">Номер</span><span style="top:343.03px;font-size:12px;line-height:16px;color:#3a3124;left:166.2px;transform-origin:0 0;transform:scaleX(0.9);">Дата</span><span style="top:343.03px;font-size:12px;line-height:16px;color:#3a3124;left:247.2px;transform-origin:0 0;transform:scaleX(0.9);">Сумма</span><span style="top:343.03px;font-size:12px;line-height:16px;color:#3a3124;left:328.2px;transform-origin:0 0;transform:scaleX(0.8951);">Валюта</span><span style="top:343.03px;font-size:12px;line-height:16px;color:#3a3124;left:376.2px;transform-origin:0 0;transform:scaleX(0.9016);">Хоз. операция</span><span style="top:343.03px;font-size:12px;line-height:16px;color:#3a3124;left:507.3px;transform-origin:0 0;transform:scaleX(0.9099);">Поставщик</span><span style="top:343.03px;font-size:12px;line-height:16px;color:#3a3124;left:638.2px;transform-origin:0 0;transform:scaleX(0.9119);">Организация</span><span style="top:343.03px;font-size:12px;line-height:16px;color:#3a3124;left:769.0px;transform-origin:0 0;transform:scaleX(0.881);">Склад</span><div style="left:58px;top:362px;width:838px;height:18px;background:#fff;"></div><div style="left:58px;top:380px;width:838px;height:1px;background:#ccd6de;"></div><svg style="left:62px;top:365px" width="16" height="14" viewBox="0 0 16 14">
<path d="M1.4 0.5 H13.6 Q14.5 0.5 14.5 1.4 V10.2 H1.4 Q0.5 10.2 0.5 9.3 V1.4 Q0.5 0.5 1.4 0.5 Z" fill="#fdfeff" stroke="#a3b6c9" stroke-width=".9"/>
<path d="M14.5 1.6 V5" stroke="#7f93a8" stroke-width="1"/><path d="M1 10.2 H5" stroke="#7f93a8" stroke-width="1"/>
<path d="M3.2 2.6h8.6M3.2 4.6h8.6M3.2 6.6h7M3.2 8.6h1.6" stroke="#d3dde8" stroke-width=".8"/>
<path d="M6.2 9.3 L7.7 7.9 L9.9 9.9 L13.7 6 L15.2 7.4 L9.9 13 Z" fill="#58bf3c" stroke="#2e8e1f" stroke-width=".7" stroke-linejoin="round"/></svg><span style="top:364.03px;font-size:12px;line-height:16px;color:#000;left:81.8px;transform-origin:0 0;transform:scaleX(0.8883);">ТТ00-000002</span><span style="top:364.03px;font-size:12px;line-height:16px;color:#000;left:167.0px;transform-origin:0 0;transform:scaleX(0.9041);">21.11.2019</span><span style="top:364.03px;font-size:12px;line-height:16px;color:#000;right:647.6px;transform-origin:100% 0;transform:scaleX(0.8991);">0,1500</span><span style="top:364.03px;font-size:12px;line-height:16px;color:#000;left:329.4px;transform-origin:0 0;transform:scaleX(0.8681);">RUB</span><span style="top:364.03px;font-size:12px;line-height:16px;color:#000;left:375.5px;transform-origin:0 0;transform:scaleX(0.8986);">Импорт</span><span style="top:364.03px;font-size:12px;line-height:16px;color:#000;left:507.2px;transform-origin:0 0;transform:scaleX(0.8784);">ТЕСТ НПП ООО</span><span style="top:364.03px;font-size:12px;line-height:16px;color:#000;left:638.4px;transform-origin:0 0;transform:scaleX(0.879);">РТТ ООО</span><span style="top:364.03px;font-size:12px;line-height:16px;color:#000;left:769.0px;transform-origin:0 0;transform:scaleX(0.9194);">Склад в Москве</span><div style="left:58px;top:381px;width:838px;height:18px;background:#f3f9f5;"></div><div style="left:58px;top:399px;width:838px;height:1px;background:#ccd6de;"></div><svg style="left:62px;top:384px" width="16" height="14" viewBox="0 0 16 14">
<path d="M1.4 0.5 H13.6 Q14.5 0.5 14.5 1.4 V10.2 H1.4 Q0.5 10.2 0.5 9.3 V1.4 Q0.5 0.5 1.4 0.5 Z" fill="#fdfeff" stroke="#a3b6c9" stroke-width=".9"/>
<path d="M14.5 1.6 V5" stroke="#7f93a8" stroke-width="1"/><path d="M1 10.2 H5" stroke="#7f93a8" stroke-width="1"/>
<path d="M3.2 2.6h8.6M3.2 4.6h8.6M3.2 6.6h7M3.2 8.6h1.6" stroke="#d3dde8" stroke-width=".8"/>
<path d="M6.2 9.3 L7.7 7.9 L9.9 9.9 L13.7 6 L15.2 7.4 L9.9 13 Z" fill="#58bf3c" stroke="#2e8e1f" stroke-width=".7" stroke-linejoin="round"/></svg><span style="top:383.03px;font-size:12px;line-height:16px;color:#000;left:81.8px;transform-origin:0 0;transform:scaleX(0.8883);">ТТ00-000003</span><span style="top:383.03px;font-size:12px;line-height:16px;color:#000;left:167.0px;transform-origin:0 0;transform:scaleX(0.9041);">21.11.2019</span><span style="top:383.03px;font-size:12px;line-height:16px;color:#000;right:647.6px;transform-origin:100% 0;transform:scaleX(0.8991);">1 200,0000</span><span style="top:383.03px;font-size:12px;line-height:16px;color:#000;left:329.4px;transform-origin:0 0;transform:scaleX(0.8681);">RUB</span><span style="top:383.03px;font-size:12px;line-height:16px;color:#000;left:375.5px;transform-origin:0 0;transform:scaleX(0.9226);">Закупка у поставщика</span><span style="top:383.03px;font-size:12px;line-height:16px;color:#000;left:507.2px;transform-origin:0 0;transform:scaleX(0.9292);">"ЭЛТЕКС" Предприят...</span><span style="top:383.03px;font-size:12px;line-height:16px;color:#000;left:638.4px;transform-origin:0 0;transform:scaleX(0.879);">РТТ ООО</span><span style="top:383.03px;font-size:12px;line-height:16px;color:#000;left:769.0px;transform-origin:0 0;transform:scaleX(0.9194);">Склад в Москве</span><div style="left:58px;top:400px;width:838px;height:18px;background:#fff;"></div><div style="left:58px;top:418px;width:838px;height:1px;background:#ccd6de;"></div><svg style="left:62px;top:403px" width="16" height="14" viewBox="0 0 16 14">
<path d="M1.4 0.5 H13.6 Q14.5 0.5 14.5 1.4 V10.2 H1.4 Q0.5 10.2 0.5 9.3 V1.4 Q0.5 0.5 1.4 0.5 Z" fill="#fdfeff" stroke="#a3b6c9" stroke-width=".9"/>
<path d="M14.5 1.6 V5" stroke="#7f93a8" stroke-width="1"/><path d="M1 10.2 H5" stroke="#7f93a8" stroke-width="1"/>
<path d="M3.2 2.6h8.6M3.2 4.6h8.6M3.2 6.6h7M3.2 8.6h1.6" stroke="#d3dde8" stroke-width=".8"/>
<path d="M6.2 9.3 L7.7 7.9 L9.9 9.9 L13.7 6 L15.2 7.4 L9.9 13 Z" fill="#58bf3c" stroke="#2e8e1f" stroke-width=".7" stroke-linejoin="round"/></svg><span style="top:402.03px;font-size:12px;line-height:16px;color:#000;left:81.8px;transform-origin:0 0;transform:scaleX(0.8883);">ТТ00-000004</span><span style="top:402.03px;font-size:12px;line-height:16px;color:#000;left:167.0px;transform-origin:0 0;transform:scaleX(0.9041);">22.11.2019</span><span style="top:402.03px;font-size:12px;line-height:16px;color:#000;right:647.6px;transform-origin:100% 0;transform:scaleX(0.8991);">0,6000</span><span style="top:402.03px;font-size:12px;line-height:16px;color:#000;left:329.4px;transform-origin:0 0;transform:scaleX(0.8681);">EUR</span><span style="top:402.03px;font-size:12px;line-height:16px;color:#000;left:375.5px;transform-origin:0 0;transform:scaleX(0.8986);">Импорт</span><span style="top:402.03px;font-size:12px;line-height:16px;color:#000;left:507.2px;transform-origin:0 0;transform:scaleX(0.9292);">"ЭЛТЕКС" Предприят...</span><span style="top:402.03px;font-size:12px;line-height:16px;color:#000;left:638.4px;transform-origin:0 0;transform:scaleX(0.879);">РТТ ООО</span><span style="top:402.03px;font-size:12px;line-height:16px;color:#000;left:769.0px;transform-origin:0 0;transform:scaleX(0.9194);">Склад в Москве</span><div style="left:58px;top:419px;width:838px;height:18px;background:#f3f9f5;"></div><div style="left:58px;top:437px;width:838px;height:1px;background:#ccd6de;"></div><svg style="left:62px;top:422px" width="16" height="14" viewBox="0 0 16 14">
<path d="M1.4 0.5 H13.6 Q14.5 0.5 14.5 1.4 V10.2 H1.4 Q0.5 10.2 0.5 9.3 V1.4 Q0.5 0.5 1.4 0.5 Z" fill="#fdfeff" stroke="#a3b6c9" stroke-width=".9"/>
<path d="M14.5 1.6 V5" stroke="#7f93a8" stroke-width="1"/><path d="M1 10.2 H5" stroke="#7f93a8" stroke-width="1"/>
<path d="M3.2 2.6h8.6M3.2 4.6h8.6M3.2 6.6h7M3.2 8.6h1.6" stroke="#d3dde8" stroke-width=".8"/>
<path d="M6.2 9.3 L7.7 7.9 L9.9 9.9 L13.7 6 L15.2 7.4 L9.9 13 Z" fill="#58bf3c" stroke="#2e8e1f" stroke-width=".7" stroke-linejoin="round"/></svg><span style="top:421.03px;font-size:12px;line-height:16px;color:#000;left:81.8px;transform-origin:0 0;transform:scaleX(0.8883);">ТТ00-000005</span><span style="top:421.03px;font-size:12px;line-height:16px;color:#000;left:167.0px;transform-origin:0 0;transform:scaleX(0.9041);">22.11.2019</span><span style="top:421.03px;font-size:12px;line-height:16px;color:#000;right:647.6px;transform-origin:100% 0;transform:scaleX(0.8988);">10,0000</span><span style="top:421.03px;font-size:12px;line-height:16px;color:#000;left:329.4px;transform-origin:0 0;transform:scaleX(0.8681);">RUB</span><span style="top:421.03px;font-size:12px;line-height:16px;color:#000;left:375.5px;transform-origin:0 0;transform:scaleX(0.9226);">Закупка у поставщика</span><span style="top:421.03px;font-size:12px;line-height:16px;color:#000;left:507.2px;transform-origin:0 0;transform:scaleX(0.8882);">_Тмаф</span><span style="top:421.03px;font-size:12px;line-height:16px;color:#000;left:638.4px;transform-origin:0 0;transform:scaleX(0.879);">РТТ ООО</span><span style="top:421.03px;font-size:12px;line-height:16px;color:#000;left:769.0px;transform-origin:0 0;transform:scaleX(0.9194);">Склад в Москве</span><div style="left:58px;top:438px;width:838px;height:18px;background:#fff;"></div><div style="left:58px;top:456px;width:838px;height:1px;background:#ccd6de;"></div><svg style="left:62px;top:441px" width="16" height="14" viewBox="0 0 16 14">
<path d="M1.4 0.5 H13.6 Q14.5 0.5 14.5 1.4 V10.2 H1.4 Q0.5 10.2 0.5 9.3 V1.4 Q0.5 0.5 1.4 0.5 Z" fill="#fdfeff" stroke="#a3b6c9" stroke-width=".9"/>
<path d="M14.5 1.6 V5" stroke="#7f93a8" stroke-width="1"/><path d="M1 10.2 H5" stroke="#7f93a8" stroke-width="1"/>
<path d="M3.2 2.6h8.6M3.2 4.6h8.6M3.2 6.6h7M3.2 8.6h1.6" stroke="#d3dde8" stroke-width=".8"/>
<path d="M6.2 9.3 L7.7 7.9 L9.9 9.9 L13.7 6 L15.2 7.4 L9.9 13 Z" fill="#58bf3c" stroke="#2e8e1f" stroke-width=".7" stroke-linejoin="round"/></svg><span style="top:440.03px;font-size:12px;line-height:16px;color:#000;left:81.8px;transform-origin:0 0;transform:scaleX(0.8641);">DS00-000001</span><span style="top:440.03px;font-size:12px;line-height:16px;color:#000;left:167.0px;transform-origin:0 0;transform:scaleX(0.8907);">10.12.2019</span><span style="top:440.03px;font-size:12px;line-height:16px;color:#000;right:647.6px;transform-origin:100% 0;transform:scaleX(0.9152);">116,4000</span><span style="top:440.03px;font-size:12px;line-height:16px;color:#000;left:329.4px;transform-origin:0 0;transform:scaleX(0.8681);">USD</span><span style="top:440.03px;font-size:12px;line-height:16px;color:#000;left:375.5px;transform-origin:0 0;transform:scaleX(0.8986);">Импорт</span><span style="top:440.03px;font-size:12px;line-height:16px;color:#000;left:507.2px;transform-origin:0 0;transform:scaleX(0.8907);">SHINEVER TECHNOL...</span><span style="top:440.03px;font-size:12px;line-height:16px;color:#000;left:638.4px;transform-origin:0 0;transform:scaleX(0.8804);">The Digital Shift Pte Ltd</span><span style="top:440.03px;font-size:12px;line-height:16px;color:#000;left:769.0px;transform-origin:0 0;transform:scaleX(0.9194);">Склад в Москве</span><div style="left:58px;top:457px;width:838px;height:18px;background:#f3f9f5;"></div><div style="left:58px;top:475px;width:838px;height:1px;background:#ccd6de;"></div><svg style="left:62px;top:460px" width="16" height="14" viewBox="0 0 16 14">
<path d="M1.4 0.5 H13.6 Q14.5 0.5 14.5 1.4 V10.2 H1.4 Q0.5 10.2 0.5 9.3 V1.4 Q0.5 0.5 1.4 0.5 Z" fill="#fdfeff" stroke="#a3b6c9" stroke-width=".9"/>
<path d="M14.5 1.6 V5" stroke="#7f93a8" stroke-width="1"/><path d="M1 10.2 H5" stroke="#7f93a8" stroke-width="1"/>
<path d="M3.2 2.6h8.6M3.2 4.6h8.6M3.2 6.6h7M3.2 8.6h1.6" stroke="#d3dde8" stroke-width=".8"/>
<path d="M6.2 9.3 L7.7 7.9 L9.9 9.9 L13.7 6 L15.2 7.4 L9.9 13 Z" fill="#58bf3c" stroke="#2e8e1f" stroke-width=".7" stroke-linejoin="round"/></svg><span style="top:459.03px;font-size:12px;line-height:16px;color:#000;left:81.8px;transform-origin:0 0;transform:scaleX(0.8918);">ЛГ00-000001</span><span style="top:459.03px;font-size:12px;line-height:16px;color:#000;left:167.0px;transform-origin:0 0;transform:scaleX(0.8907);">17.12.2019</span><span style="top:459.03px;font-size:12px;line-height:16px;color:#000;right:647.6px;transform-origin:100% 0;transform:scaleX(0.8991);">23 358,0000</span><span style="top:459.03px;font-size:12px;line-height:16px;color:#000;left:329.4px;transform-origin:0 0;transform:scaleX(0.8681);">RUB</span><span style="top:459.03px;font-size:12px;line-height:16px;color:#000;left:375.5px;transform-origin:0 0;transform:scaleX(0.8986);">Импорт</span><span style="top:459.03px;font-size:12px;line-height:16px;color:#000;left:507.2px;transform-origin:0 0;transform:scaleX(0.8918);">Арвис Групп ООО</span><span style="top:459.03px;font-size:12px;line-height:16px;color:#000;left:638.4px;transform-origin:0 0;transform:scaleX(0.917);">РАДИОТЕХ-ЛОГИСТ...</span><span style="top:459.03px;font-size:12px;line-height:16px;color:#000;left:769.0px;transform-origin:0 0;transform:scaleX(0.9122);">Склад НК</span><div style="left:58px;top:476px;width:838px;height:18px;background:#fff;"></div><div style="left:58px;top:494px;width:838px;height:1px;background:#ccd6de;"></div><svg style="left:62px;top:479px" width="16" height="14" viewBox="0 0 16 14">
<path d="M1.4 0.5 H13.6 Q14.5 0.5 14.5 1.4 V10.2 H1.4 Q0.5 10.2 0.5 9.3 V1.4 Q0.5 0.5 1.4 0.5 Z" fill="#fdfeff" stroke="#a3b6c9" stroke-width=".9"/>
<path d="M14.5 1.6 V5" stroke="#7f93a8" stroke-width="1"/><path d="M1 10.2 H5" stroke="#7f93a8" stroke-width="1"/>
<path d="M3.2 2.6h8.6M3.2 4.6h8.6M3.2 6.6h7M3.2 8.6h1.6" stroke="#d3dde8" stroke-width=".8"/>
<path d="M6.2 9.3 L7.7 7.9 L9.9 9.9 L13.7 6 L15.2 7.4 L9.9 13 Z" fill="#58bf3c" stroke="#2e8e1f" stroke-width=".7" stroke-linejoin="round"/></svg><span style="top:478.03px;font-size:12px;line-height:16px;color:#000;left:81.8px;transform-origin:0 0;transform:scaleX(0.8918);">ЛГ00-000002</span><span style="top:478.03px;font-size:12px;line-height:16px;color:#000;left:167.0px;transform-origin:0 0;transform:scaleX(0.8907);">17.12.2019</span><span style="top:478.03px;font-size:12px;line-height:16px;color:#000;right:647.6px;transform-origin:100% 0;transform:scaleX(0.8988);">20,0000</span><span style="top:478.03px;font-size:12px;line-height:16px;color:#000;left:329.4px;transform-origin:0 0;transform:scaleX(0.8681);">RUB</span><span style="top:478.03px;font-size:12px;line-height:16px;color:#000;left:375.5px;transform-origin:0 0;transform:scaleX(0.8986);">Импорт</span><span style="top:478.03px;font-size:12px;line-height:16px;color:#000;left:507.2px;transform-origin:0 0;transform:scaleX(0.8869);">Трест-МЭК ООО</span><span style="top:478.03px;font-size:12px;line-height:16px;color:#000;left:638.4px;transform-origin:0 0;transform:scaleX(0.917);">РАДИОТЕХ-ЛОГИСТ...</span><span style="top:478.03px;font-size:12px;line-height:16px;color:#000;left:769.0px;transform-origin:0 0;transform:scaleX(0.9122);">Склад НК</span><div style="left:58px;top:495px;width:838px;height:18px;background:#f3f9f5;"></div><div style="left:58px;top:513px;width:838px;height:1px;background:#ccd6de;"></div><svg style="left:62px;top:498px" width="16" height="14" viewBox="0 0 16 14">
<path d="M1.4 0.5 H13.6 Q14.5 0.5 14.5 1.4 V10.2 H1.4 Q0.5 10.2 0.5 9.3 V1.4 Q0.5 0.5 1.4 0.5 Z" fill="#fdfeff" stroke="#a3b6c9" stroke-width=".9"/>
<path d="M14.5 1.6 V5" stroke="#7f93a8" stroke-width="1"/><path d="M1 10.2 H5" stroke="#7f93a8" stroke-width="1"/>
<path d="M3.2 2.6h8.6M3.2 4.6h8.6M3.2 6.6h7M3.2 8.6h1.6" stroke="#d3dde8" stroke-width=".8"/>
<path d="M6.2 9.3 L7.7 7.9 L9.9 9.9 L13.7 6 L15.2 7.4 L9.9 13 Z" fill="#58bf3c" stroke="#2e8e1f" stroke-width=".7" stroke-linejoin="round"/></svg><span style="top:497.03px;font-size:12px;line-height:16px;color:#000;left:81.8px;transform-origin:0 0;transform:scaleX(0.8918);">ЛГ00-000006</span><span style="top:497.03px;font-size:12px;line-height:16px;color:#000;left:167.0px;transform-origin:0 0;transform:scaleX(0.8907);">17.12.2019</span><span style="top:497.03px;font-size:12px;line-height:16px;color:#000;right:647.6px;transform-origin:100% 0;transform:scaleX(0.8989);">338,0000</span><span style="top:497.03px;font-size:12px;line-height:16px;color:#000;left:329.4px;transform-origin:0 0;transform:scaleX(0.8681);">RUB</span><span style="top:497.03px;font-size:12px;line-height:16px;color:#000;left:375.5px;transform-origin:0 0;transform:scaleX(0.8986);">Импорт</span><span style="top:497.03px;font-size:12px;line-height:16px;color:#000;left:507.2px;transform-origin:0 0;transform:scaleX(0.9439);">МФК Точка Опоры</span><span style="top:497.03px;font-size:12px;line-height:16px;color:#000;left:638.4px;transform-origin:0 0;transform:scaleX(0.917);">РАДИОТЕХ-ЛОГИСТ...</span><span style="top:497.03px;font-size:12px;line-height:16px;color:#000;left:769.0px;transform-origin:0 0;transform:scaleX(0.9122);">Склад НК</span><div style="left:58px;top:514px;width:838px;height:18px;background:#fff;"></div><div style="left:58px;top:532px;width:838px;height:1px;background:#ccd6de;"></div><svg style="left:62px;top:517px" width="16" height="14" viewBox="0 0 16 14">
<path d="M1.4 0.5 H13.6 Q14.5 0.5 14.5 1.4 V10.2 H1.4 Q0.5 10.2 0.5 9.3 V1.4 Q0.5 0.5 1.4 0.5 Z" fill="#fdfeff" stroke="#a3b6c9" stroke-width=".9"/>
<path d="M14.5 1.6 V5" stroke="#7f93a8" stroke-width="1"/><path d="M1 10.2 H5" stroke="#7f93a8" stroke-width="1"/>
<path d="M3.2 2.6h8.6M3.2 4.6h8.6M3.2 6.6h7M3.2 8.6h1.6" stroke="#d3dde8" stroke-width=".8"/>
<path d="M6.2 9.3 L7.7 7.9 L9.9 9.9 L13.7 6 L15.2 7.4 L9.9 13 Z" fill="#58bf3c" stroke="#2e8e1f" stroke-width=".7" stroke-linejoin="round"/></svg><span style="top:516.03px;font-size:12px;line-height:16px;color:#000;left:81.8px;transform-origin:0 0;transform:scaleX(0.8918);">ЛГ00-000005</span><span style="top:516.03px;font-size:12px;line-height:16px;color:#000;left:167.0px;transform-origin:0 0;transform:scaleX(0.8907);">17.12.2019</span><span style="top:516.03px;font-size:12px;line-height:16px;color:#000;right:647.6px;transform-origin:100% 0;transform:scaleX(0.8989);">150,0000</span><span style="top:516.03px;font-size:12px;line-height:16px;color:#000;left:329.4px;transform-origin:0 0;transform:scaleX(0.8681);">RUB</span><span style="top:516.03px;font-size:12px;line-height:16px;color:#000;left:375.5px;transform-origin:0 0;transform:scaleX(0.8986);">Импорт</span><span style="top:516.03px;font-size:12px;line-height:16px;color:#000;left:507.2px;transform-origin:0 0;transform:scaleX(0.9);">1</span><span style="top:516.03px;font-size:12px;line-height:16px;color:#000;left:638.4px;transform-origin:0 0;transform:scaleX(0.917);">РАДИОТЕХ-ЛОГИСТ...</span><span style="top:516.03px;font-size:12px;line-height:16px;color:#000;left:769.0px;transform-origin:0 0;transform:scaleX(0.9122);">Склад НК</span><div style="left:58px;top:533px;width:838px;height:18px;background:#f3f9f5;"></div><div style="left:58px;top:551px;width:838px;height:1px;background:#ccd6de;"></div><svg style="left:62px;top:536px" width="16" height="14" viewBox="0 0 16 14">
<path d="M1.4 0.5 H13.6 Q14.5 0.5 14.5 1.4 V10.2 H1.4 Q0.5 10.2 0.5 9.3 V1.4 Q0.5 0.5 1.4 0.5 Z" fill="#fdfeff" stroke="#a3b6c9" stroke-width=".9"/>
<path d="M14.5 1.6 V5" stroke="#7f93a8" stroke-width="1"/><path d="M1 10.2 H5" stroke="#7f93a8" stroke-width="1"/>
<path d="M3.2 2.6h8.6M3.2 4.6h8.6M3.2 6.6h7M3.2 8.6h1.6" stroke="#d3dde8" stroke-width=".8"/>
<path d="M6.2 9.3 L7.7 7.9 L9.9 9.9 L13.7 6 L15.2 7.4 L9.9 13 Z" fill="#58bf3c" stroke="#2e8e1f" stroke-width=".7" stroke-linejoin="round"/></svg><span style="top:535.03px;font-size:12px;line-height:16px;color:#000;left:81.8px;transform-origin:0 0;transform:scaleX(0.8918);">ЛГ00-000007</span><span style="top:535.03px;font-size:12px;line-height:16px;color:#000;left:167.0px;transform-origin:0 0;transform:scaleX(0.8907);">18.12.2019</span><span style="top:535.03px;font-size:12px;line-height:16px;color:#000;right:647.6px;transform-origin:100% 0;transform:scaleX(0.8991);">24 492,0000</span><span style="top:535.03px;font-size:12px;line-height:16px;color:#000;left:329.4px;transform-origin:0 0;transform:scaleX(0.8681);">EUR</span><span style="top:535.03px;font-size:12px;line-height:16px;color:#000;left:375.5px;transform-origin:0 0;transform:scaleX(0.8986);">Импорт</span><span style="top:535.03px;font-size:12px;line-height:16px;color:#000;left:507.2px;transform-origin:0 0;transform:scaleX(0.8798);">_XXX</span><span style="top:535.03px;font-size:12px;line-height:16px;color:#000;left:638.4px;transform-origin:0 0;transform:scaleX(0.917);">РАДИОТЕХ-ЛОГИСТ...</span><span style="top:535.03px;font-size:12px;line-height:16px;color:#000;left:769.0px;transform-origin:0 0;transform:scaleX(0.9105);">Склад АЕК</span><div style="left:58px;top:552px;width:838px;height:18px;background:#fff;"></div><div style="left:58px;top:570px;width:838px;height:1px;background:#ccd6de;"></div><svg style="left:62px;top:555px" width="16" height="14" viewBox="0 0 16 14">
<path d="M1.4 0.5 H13.6 Q14.5 0.5 14.5 1.4 V10.2 H1.4 Q0.5 10.2 0.5 9.3 V1.4 Q0.5 0.5 1.4 0.5 Z" fill="#fdfeff" stroke="#a3b6c9" stroke-width=".9"/>
<path d="M14.5 1.6 V5" stroke="#7f93a8" stroke-width="1"/><path d="M1 10.2 H5" stroke="#7f93a8" stroke-width="1"/>
<path d="M3.2 2.6h8.6M3.2 4.6h8.6M3.2 6.6h7M3.2 8.6h1.6" stroke="#d3dde8" stroke-width=".8"/>
<path d="M6.2 9.3 L7.7 7.9 L9.9 9.9 L13.7 6 L15.2 7.4 L9.9 13 Z" fill="#58bf3c" stroke="#2e8e1f" stroke-width=".7" stroke-linejoin="round"/></svg><span style="top:554.03px;font-size:12px;line-height:16px;color:#000;left:81.8px;transform-origin:0 0;transform:scaleX(0.8918);">ЛГ00-000008</span><span style="top:554.03px;font-size:12px;line-height:16px;color:#000;left:167.0px;transform-origin:0 0;transform:scaleX(0.8907);">20.12.2019</span><span style="top:554.03px;font-size:12px;line-height:16px;color:#000;right:647.6px;transform-origin:100% 0;transform:scaleX(0.8991);">1 486 470,00...</span><span style="top:554.03px;font-size:12px;line-height:16px;color:#000;left:329.4px;transform-origin:0 0;transform:scaleX(0.8681);">RUB</span><span style="top:554.03px;font-size:12px;line-height:16px;color:#000;left:375.5px;transform-origin:0 0;transform:scaleX(0.8986);">Импорт</span><span style="top:554.03px;font-size:12px;line-height:16px;color:#000;left:507.2px;transform-origin:0 0;transform:scaleX(0.8798);">_XXX</span><span style="top:554.03px;font-size:12px;line-height:16px;color:#000;left:638.4px;transform-origin:0 0;transform:scaleX(0.917);">РАДИОТЕХ-ЛОГИСТ...</span><span style="top:554.03px;font-size:12px;line-height:16px;color:#000;left:769.0px;transform-origin:0 0;transform:scaleX(0.9105);">Склад АЕК</span><div style="left:58px;top:571px;width:838px;height:18px;background:#f3f9f5;"></div><div style="left:58px;top:589px;width:838px;height:1px;background:#ccd6de;"></div><svg style="left:62px;top:574px" width="16" height="14" viewBox="0 0 16 14">
<path d="M1.4 0.5 H13.6 Q14.5 0.5 14.5 1.4 V10.2 H1.4 Q0.5 10.2 0.5 9.3 V1.4 Q0.5 0.5 1.4 0.5 Z" fill="#fdfeff" stroke="#a3b6c9" stroke-width=".9"/>
<path d="M14.5 1.6 V5" stroke="#7f93a8" stroke-width="1"/><path d="M1 10.2 H5" stroke="#7f93a8" stroke-width="1"/>
<path d="M3.2 2.6h8.6M3.2 4.6h8.6M3.2 6.6h7M3.2 8.6h1.6" stroke="#d3dde8" stroke-width=".8"/>
<path d="M6.2 9.3 L7.7 7.9 L9.9 9.9 L13.7 6 L15.2 7.4 L9.9 13 Z" fill="#58bf3c" stroke="#2e8e1f" stroke-width=".7" stroke-linejoin="round"/></svg><span style="top:573.03px;font-size:12px;line-height:16px;color:#000;left:81.8px;transform-origin:0 0;transform:scaleX(0.8918);">ЛГ00-000009</span><span style="top:573.03px;font-size:12px;line-height:16px;color:#000;left:167.0px;transform-origin:0 0;transform:scaleX(0.8907);">25.12.2019</span><span style="top:573.03px;font-size:12px;line-height:16px;color:#000;right:647.6px;transform-origin:100% 0;transform:scaleX(0.8991);">4,8100</span><span style="top:573.03px;font-size:12px;line-height:16px;color:#000;left:329.4px;transform-origin:0 0;transform:scaleX(0.8681);">USD</span><span style="top:573.03px;font-size:12px;line-height:16px;color:#000;left:375.5px;transform-origin:0 0;transform:scaleX(0.8986);">Импорт</span><span style="top:573.03px;font-size:12px;line-height:16px;color:#000;left:507.2px;transform-origin:0 0;transform:scaleX(0.8798);">_XXX</span><span style="top:573.03px;font-size:12px;line-height:16px;color:#000;left:638.4px;transform-origin:0 0;transform:scaleX(0.917);">РАДИОТЕХ-ЛОГИСТ...</span><span style="top:573.03px;font-size:12px;line-height:16px;color:#000;left:769.0px;transform-origin:0 0;transform:scaleX(0.9105);">Склад АЕК</span><div style="left:58px;top:590px;width:838px;height:18px;background:#fff;"></div><div style="left:58px;top:608px;width:838px;height:1px;background:#ccd6de;"></div><svg style="left:62px;top:593px" width="16" height="14" viewBox="0 0 16 14">
<path d="M1.4 0.5 H13.6 Q14.5 0.5 14.5 1.4 V10.2 H1.4 Q0.5 10.2 0.5 9.3 V1.4 Q0.5 0.5 1.4 0.5 Z" fill="#fdfeff" stroke="#a3b6c9" stroke-width=".9"/>
<path d="M14.5 1.6 V5" stroke="#7f93a8" stroke-width="1"/><path d="M1 10.2 H5" stroke="#7f93a8" stroke-width="1"/>
<path d="M3.2 2.6h8.6M3.2 4.6h8.6M3.2 6.6h7M3.2 8.6h1.6" stroke="#d3dde8" stroke-width=".8"/>
<path d="M6.2 9.3 L7.7 7.9 L9.9 9.9 L13.7 6 L15.2 7.4 L9.9 13 Z" fill="#58bf3c" stroke="#2e8e1f" stroke-width=".7" stroke-linejoin="round"/></svg><span style="top:592.03px;font-size:12px;line-height:16px;color:#000;left:81.8px;transform-origin:0 0;transform:scaleX(0.8918);">ЛГ00-000010</span><span style="top:592.03px;font-size:12px;line-height:16px;color:#000;left:167.0px;transform-origin:0 0;transform:scaleX(0.8907);">25.12.2019</span><span style="top:592.03px;font-size:12px;line-height:16px;color:#000;right:647.6px;transform-origin:100% 0;transform:scaleX(0.8989);">100,0000</span><span style="top:592.03px;font-size:12px;line-height:16px;color:#000;left:329.4px;transform-origin:0 0;transform:scaleX(0.8681);">RUB</span><span style="top:592.03px;font-size:12px;line-height:16px;color:#000;left:375.5px;transform-origin:0 0;transform:scaleX(0.9226);">Закупка у поставщика</span><span style="top:592.03px;font-size:12px;line-height:16px;color:#000;left:507.2px;transform-origin:0 0;transform:scaleX(0.8928);">_ДрафтТрейд ООО</span><span style="top:592.03px;font-size:12px;line-height:16px;color:#000;left:638.4px;transform-origin:0 0;transform:scaleX(0.917);">РАДИОТЕХ-ЛОГИСТ...</span><span style="top:592.03px;font-size:12px;line-height:16px;color:#000;left:769.0px;transform-origin:0 0;transform:scaleX(0.9105);">Склад АЕК</span><div style="left:58px;top:609px;width:838px;height:18px;background:#cce4ff;"></div><div style="left:58px;top:627px;width:838px;height:1px;background:#ccd6de;"></div><div style="left:163px;top:609px;width:80px;height:18px;background:#6f97d0;"></div><svg style="left:62px;top:612px" width="16" height="14" viewBox="0 0 16 14">
<path d="M1.4 0.5 H13.6 Q14.5 0.5 14.5 1.4 V10.2 H1.4 Q0.5 10.2 0.5 9.3 V1.4 Q0.5 0.5 1.4 0.5 Z" fill="#fdfeff" stroke="#a3b6c9" stroke-width=".9"/>
<path d="M14.5 1.6 V5" stroke="#7f93a8" stroke-width="1"/><path d="M1 10.2 H5" stroke="#7f93a8" stroke-width="1"/>
<path d="M3.2 2.6h8.6M3.2 4.6h8.6M3.2 6.6h7M3.2 8.6h1.6" stroke="#d3dde8" stroke-width=".8"/>
<path d="M6.2 9.3 L7.7 7.9 L9.9 9.9 L13.7 6 L15.2 7.4 L9.9 13 Z" fill="#58bf3c" stroke="#2e8e1f" stroke-width=".7" stroke-linejoin="round"/></svg><span style="top:611.03px;font-size:12px;line-height:16px;color:#000;left:81.8px;transform-origin:0 0;transform:scaleX(0.903);">ЛГ00-000011</span><span style="top:611.03px;font-size:12px;line-height:16px;color:#fff;left:167.0px;transform-origin:0 0;transform:scaleX(0.8907);">25.12.2019</span><span style="top:611.03px;font-size:12px;line-height:16px;color:#000;right:647.6px;transform-origin:100% 0;transform:scaleX(0.8988);">10,0000</span><span style="top:611.03px;font-size:12px;line-height:16px;color:#000;left:329.4px;transform-origin:0 0;transform:scaleX(0.8681);">RUB</span><span style="top:611.03px;font-size:12px;line-height:16px;color:#000;left:375.5px;transform-origin:0 0;transform:scaleX(0.9226);">Закупка у поставщика</span><span style="top:611.03px;font-size:12px;line-height:16px;color:#000;left:507.2px;transform-origin:0 0;transform:scaleX(0.9036);">_Мегасервис ООО</span><span style="top:611.03px;font-size:12px;line-height:16px;color:#000;left:638.4px;transform-origin:0 0;transform:scaleX(0.917);">РАДИОТЕХ-ЛОГИСТ...</span><span style="top:611.03px;font-size:12px;line-height:16px;color:#000;left:769.0px;transform-origin:0 0;transform:scaleX(0.9105);">Склад АЕК</span><div style="left:162px;top:362px;width:1px;height:266px;background:#ccd6de;"></div><div style="left:243px;top:362px;width:1px;height:266px;background:#ccd6de;"></div><div style="left:324px;top:362px;width:1px;height:266px;background:#ccd6de;"></div><div style="left:371px;top:362px;width:1px;height:266px;background:#ccd6de;"></div><div style="left:502px;top:362px;width:1px;height:266px;background:#ccd6de;"></div><div style="left:633px;top:362px;width:1px;height:266px;background:#ccd6de;"></div><div style="left:764px;top:362px;width:1px;height:266px;background:#ccd6de;"></div><div style="left:896px;top:341px;width:16px;height:300px;background:#faf8ee;border-left:1px solid #c9c09a;"></div><div style="left:896px;top:341px;width:16px;height:21px;background:linear-gradient(90deg,#faf7e6,#eee8d0);border-left:1px solid #c9c09a;border-bottom:1px solid #c9c09a;"></div><div style="left:896px;top:620px;width:16px;height:21px;background:linear-gradient(90deg,#faf7e6,#eee8d0);border-left:1px solid #c9c09a;border-top:1px solid #c9c09a;"></div><div style="left:897px;top:483px;width:15px;height:16px;background:linear-gradient(90deg,#f9f6e4,#e9e1bd);border-top:1px solid #b8ae85;border-bottom:1px solid #b8ae85;"></div><div style="left:902px;top:489px;width:5px;height:5px;border-radius:3px;background:radial-gradient(circle at 65% 60%,#f3eed8,#d3cbab);"></div><svg style="left:900.5px;top:347.3px" width="8" height="7" viewBox="0 0 8 7"><path d="M4 0 L8 7 L0 7 Z" fill="#8e8e8e"/></svg><svg style="left:900.5px;top:627.8px" width="8" height="7" viewBox="0 0 8 7"><path d="M0 0 L8 0 L4 7 Z" fill="#6e6e6e"/></svg><div style="left:166px;top:346px;width:193px;height:20px;background:#fff9dd;border:1px solid #aca17a;"></div><span style="top:348.03px;font-size:12px;line-height:16px;color:#1a1a1a;left:170.0px;transform-origin:0 0;transform:scaleX(0.9187);">Создать новый элемент списка (Ins)</span><svg style="left:166px;top:324.5px" width="14" height="22" viewBox="0 0 14 22"><path d="M0.6 0.8 V17 L4.4 13.4 L7.2 20.4 L10 19.2 L7.2 12.4 H12.2 Z" fill="#fff" stroke="#000" stroke-width="1.1" stroke-linejoin="miter"/></svg><div style="left:124px;top:308px;width:80px;height:35px;border:5px solid #22b14c;"></div><div style="left:156px;top:602px;width:103px;height:27px;border:5px solid #22b14c;"></div>
</body></html>
